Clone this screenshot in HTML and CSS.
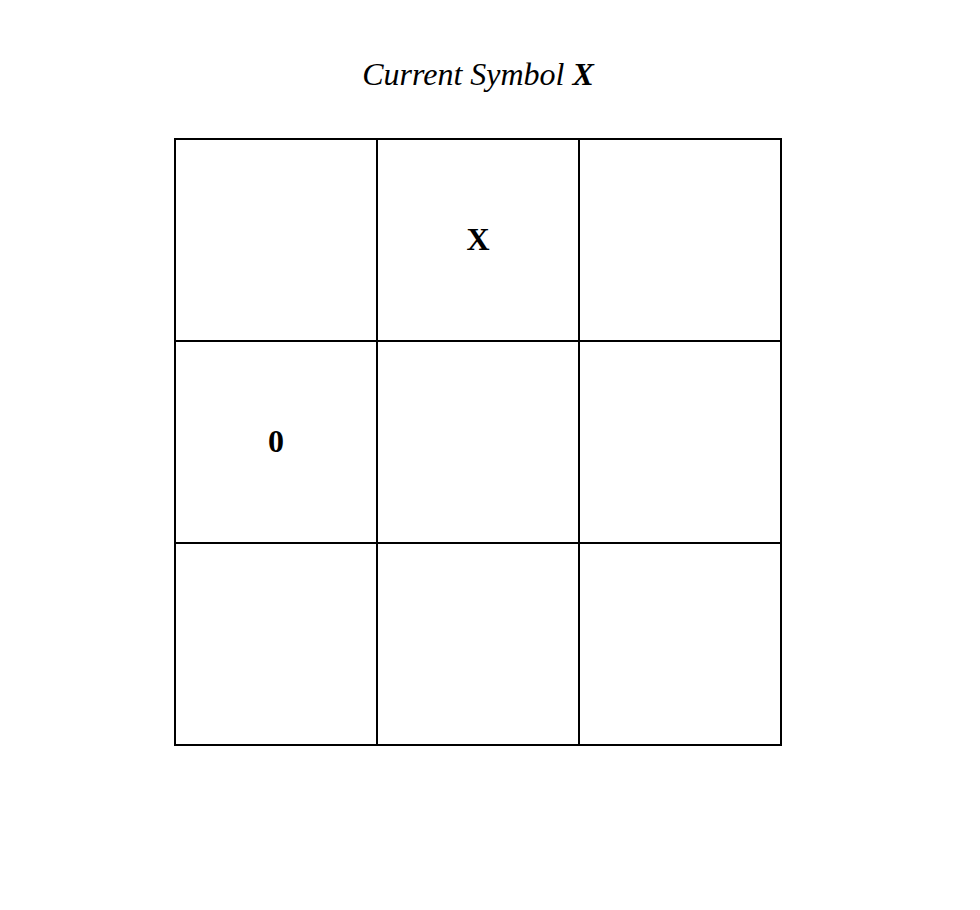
FILE: index.html
```html
<!DOCTYPE html>
<html>
<head>
<meta charset="utf-8">
<link rel="stylesheet" href="styles.css">
</head>
<body>
<div class="game">
  <h1 class="status">Current Symbol <b>X</b></h1>
  <div class="board">
    <div class="cell"></div>
    <div class="cell">X</div>
    <div class="cell"></div>
    <div class="cell">0</div>
    <div class="cell"></div>
    <div class="cell"></div>
    <div class="cell"></div>
    <div class="cell"></div>
    <div class="cell"></div>
  </div>
</div>
</body>
</html>
```
FILE: styles.css
```css
html, body {
  margin: 0;
  padding: 0;
  background: #fff;
}
body {
  font-family: "Liberation Serif", "Times New Roman", serif;
  color: #000;
}
.game {
  width: 608px;
  margin-left: 174px;
  padding-top: 56px;
}
.status {
  margin: 0 0 46px 0;
  font-size: 32px;
  line-height: 36px;
  font-weight: normal;
  font-style: italic;
  text-align: center;
}
.status b {
  font-weight: bold;
}
.board {
  display: grid;
  grid-template-columns: repeat(3, 202px);
  grid-template-rows: repeat(3, 202px);
  border: 1px solid #000;
  width: 606px;
}
.cell {
  border: 1px solid #000;
  display: flex;
  align-items: center;
  justify-content: center;
  font-size: 32px;
  font-weight: bold;
  padding-bottom: 2px;
  box-sizing: border-box;
}
```
